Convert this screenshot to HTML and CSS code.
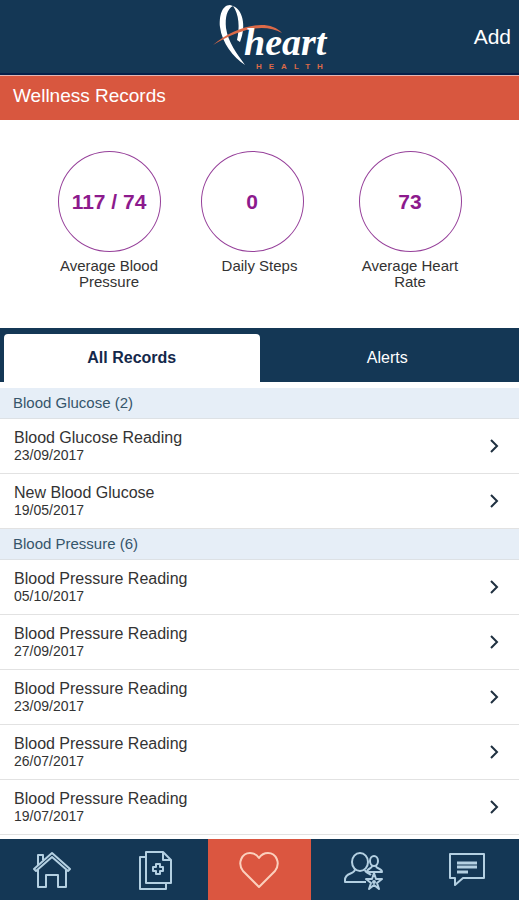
FILE: index.html
```
<!DOCTYPE html>
<html lang="en">
    <head>
        <meta charset="utf-8">
        <meta name="viewport" content="width=device-width, initial-scale=1">
        <title>Wellness Records</title>
        <link rel="stylesheet" href="styles.css">
    </head>

    <body>
        <header class="header">
            <svg class="logo" viewBox="0 0 120 72" role="img" aria-label="heart health">
                <path class="logo-loop" d="M33 6 C42 9 47 25 40 42 L37 40 C40 28 39 14 33 6 Z"/>
                <path class="logo-loop" d="M30 5 C22 5 19 16 20 27 C22 43 33 57 45 65 C37 54 28 42 26 28 C25 17 27 9 33 6 Z"/>
                <path class="logo-swoosh" d="M13 45 C34 27 68 17 82 33 C64 23 42 28 13 45 Z"/>
                <text class="logo-name" x="44" y="55">heart</text>
                <text class="logo-sub" x="56" y="69">HEALTH</text>
            </svg>
            <button class="add" type="button">Add</button>
        </header>

        <h1 class="title">Wellness Records</h1>

        <section class="stats">
            <div class="stat">
                <div class="circle">117 / 74</div>
                <div class="stat-label">Average Blood Pressure</div>
            </div>
            <div class="stat stat-wide">
                <div class="circle">0</div>
                <div class="stat-label">Daily Steps</div>
            </div>
            <div class="stat">
                <div class="circle">73</div>
                <div class="stat-label">Average Heart Rate</div>
            </div>
        </section>

        <div class="tabs">
            <button class="tab active" type="button">All Records</button>
            <button class="tab" type="button">Alerts</button>
        </div>

        <main class="records">
            <h2 class="group">Blood Glucose (2)</h2>
            <a class="record" href="#">
                <span class="record-text">
                    <span class="record-name">Blood Glucose Reading</span>
                    <span class="record-date">23/09/2017</span>
                </span>
                <svg class="chevron" viewBox="0 0 10 14"><path d="M2 1 L8 7 L2 13"/></svg>
            </a>
            <a class="record" href="#">
                <span class="record-text">
                    <span class="record-name">New Blood Glucose</span>
                    <span class="record-date">19/05/2017</span>
                </span>
                <svg class="chevron" viewBox="0 0 10 14"><path d="M2 1 L8 7 L2 13"/></svg>
            </a>

            <h2 class="group">Blood Pressure (6)</h2>
            <a class="record" href="#">
                <span class="record-text">
                    <span class="record-name">Blood Pressure Reading</span>
                    <span class="record-date">05/10/2017</span>
                </span>
                <svg class="chevron" viewBox="0 0 10 14"><path d="M2 1 L8 7 L2 13"/></svg>
            </a>
            <a class="record" href="#">
                <span class="record-text">
                    <span class="record-name">Blood Pressure Reading</span>
                    <span class="record-date">27/09/2017</span>
                </span>
                <svg class="chevron" viewBox="0 0 10 14"><path d="M2 1 L8 7 L2 13"/></svg>
            </a>
            <a class="record" href="#">
                <span class="record-text">
                    <span class="record-name">Blood Pressure Reading</span>
                    <span class="record-date">23/09/2017</span>
                </span>
                <svg class="chevron" viewBox="0 0 10 14"><path d="M2 1 L8 7 L2 13"/></svg>
            </a>
            <a class="record" href="#">
                <span class="record-text">
                    <span class="record-name">Blood Pressure Reading</span>
                    <span class="record-date">26/07/2017</span>
                </span>
                <svg class="chevron" viewBox="0 0 10 14"><path d="M2 1 L8 7 L2 13"/></svg>
            </a>
            <a class="record" href="#">
                <span class="record-text">
                    <span class="record-name">Blood Pressure Reading</span>
                    <span class="record-date">19/07/2017</span>
                </span>
                <svg class="chevron" viewBox="0 0 10 14"><path d="M2 1 L8 7 L2 13"/></svg>
            </a>
        </main>

        <nav class="nav">
            <a class="nav-item" href="#" aria-label="Home">
                <svg class="icon" viewBox="0 0 40 40">
                    <path d="M2 19 L20 3 L38 19 L36 21 L20 7 L4 21 Z"/>
                    <path d="M6 15 V5 H11 V10"/>
                    <path d="M6 20 V37 H14 V25 H26 V37 H34 V20"/>
                </svg>
            </a>
            <a class="nav-item" href="#" aria-label="Records">
                <svg class="icon" viewBox="0 0 40 40">
                    <path d="M10 2 H27 L35 10 V33 H10 Z"/>
                    <path d="M27 2 V10 H35"/>
                    <path d="M10 7 H4 V39 H30 V33"/>
                    <path d="M20 14 H24 V17 H27 V21 H24 V24 H20 V21 H17 V17 H20 Z"/>
                </svg>
            </a>
            <a class="nav-item current" href="#" aria-label="Wellness">
                <svg class="icon" viewBox="0 0 40 40">
                    <path d="M20 37 L4 21 C-2 13 3 3 11 3 C15 3 18 5 20 8 C22 5 25 3 29 3 C37 3 42 13 36 21 Z"/>
                </svg>
            </a>
            <a class="nav-item" href="#" aria-label="Community">
                <svg class="icon" viewBox="0 0 40 40">
                    <ellipse cx="17" cy="12" rx="8" ry="9"/>
                    <path d="M12 19 C12 25 2 22 2 30 V32 H23"/>
                    <path d="M22 20 C22 23 25 22 28 25"/>
                    <ellipse cx="31" cy="11" rx="4" ry="5"/>
                    <path d="M29 16 C29 19 24 18 24 22 H39 C39 18 33 19 33 16"/>
                    <path d="M31 23 L33 29 H39 L34 33 L36 39 L31 35 L26 39 L28 33 L23 29 H29 Z"/>
                    <circle cx="31" cy="32" r="1"/>
                </svg>
            </a>
            <a class="nav-item" href="#" aria-label="Messages">
                <svg class="icon" viewBox="0 0 40 40">
                    <path d="M3 4 H37 V28 H16 L8 35 V28 H3 Z"/>
                    <path class="lines" d="M10 13 H30 M10 17 H30 M10 22 H21"/>
                </svg>
            </a>
        </nav>
    </body>
</html>
```

FILE: styles.css
```
* {
    box-sizing: border-box;
}

body {
    display: flex;
    flex-direction: column;
    min-height: 100vh;
    margin: 0;
    background: #fff;
    color: #333;
    font-family: "Liberation Sans", Arial, sans-serif;
}

button {
    border: 0;
    background: none;
    font-family: inherit;
    cursor: pointer;
}

a {
    color: inherit;
    text-decoration: none;
}

.header {
    display: grid;
    grid-template-columns: 1fr auto 1fr;
    height: 75px;
    padding: 0 8px;
    background: #143755;
    border-bottom: 2px solid #06204a;
}

.logo {
    grid-column: 2;
    width: 120px;
    height: 72px;
    overflow: visible;
}

.logo-loop {
    fill: #fff;
}

.logo-swoosh {
    fill: #dc6a48;
}

.logo-name {
    fill: #fff;
    font: italic bold 38px "Liberation Serif", serif;
}

.logo-sub {
    fill: #dc6a48;
    font-size: 8px;
    font-weight: bold;
    letter-spacing: 7px;
}

.add {
    justify-self: end;
    align-self: center;
    padding: 0;
    color: #fff;
    font-size: 21px;
}

.title {
    height: 45px;
    margin: 0;
    padding: 0 13px;
    background: #d8573f;
    border-top: 1px solid #e3b5b3;
    color: #fff;
    font-size: 19px;
    font-weight: normal;
    line-height: 40px;
}

.stats {
    display: flex;
    justify-content: center;
    gap: 40px;
    height: 208px;
    padding-top: 31px;
}

.stat {
    width: 103px;
}

.stat-wide {
    width: 118px;
}

.circle {
    display: flex;
    align-items: center;
    justify-content: center;
    width: 103px;
    height: 101px;
    border: 1px solid #96409a;
    border-radius: 50%;
    color: #8d1a8d;
    font-size: 21px;
    font-weight: bold;
}

.stat-label {
    margin-top: 6px;
    font-size: 15px;
    line-height: 16px;
    text-align: center;
}

.tabs {
    display: flex;
    height: 54px;
    padding: 6px 4px 0;
    background: #143755;
}

.tab {
    flex: 1;
    color: #fff;
    font-size: 16px;
}

.tab.active {
    background: #fff;
    border-radius: 4px 4px 0 0;
    color: #14284a;
    font-weight: bold;
}

.records {
    flex: 1;
    padding-top: 6px;
}

.group {
    height: 31px;
    margin: 0;
    padding: 0 13px;
    background: #e6eef7;
    border-bottom: 1px solid #dde1e5;
    color: #35556b;
    font-size: 15px;
    font-weight: normal;
    line-height: 30px;
}

.record {
    display: flex;
    align-items: center;
    justify-content: space-between;
    height: 55px;
    padding: 0 20px 0 14px;
    border-bottom: 1px solid #e2e2e2;
}

.record-name,
.record-date {
    display: block;
}

.record-name {
    font-size: 16px;
    line-height: 19px;
}

.record-date {
    font-size: 14px;
    line-height: 17px;
}

.chevron {
    width: 10px;
    height: 14px;
    fill: none;
    stroke: #1f3040;
    stroke-width: 2;
}

.nav {
    position: sticky;
    bottom: 0;
    display: flex;
    height: 61px;
    background: #143755;
}

.nav-item {
    display: flex;
    flex: 1;
    align-items: center;
    justify-content: center;
}

.nav-item.current {
    background: #db5640;
}

.icon {
    width: 40px;
    height: 40px;
    fill: none;
    stroke: #b4d0e2;
    stroke-width: 2;
    stroke-linejoin: round;
}

.current .icon {
    stroke: #fbd0bd;
}

.icon .lines {
    stroke-width: 3;
}
```
